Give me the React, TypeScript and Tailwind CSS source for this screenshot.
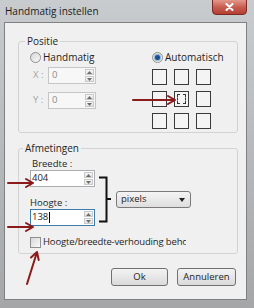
import React from "react";

function Spin() {
  return (
    <div className="flex flex-col h-full w-[10px] py-[1px] pr-[1px] gap-[1px]">
      <div className="flex-1 bg-gradient-to-b from-[#f6f6f6] to-[#e2e2e2] border border-[#c9c9c9] flex items-center justify-center">
        <svg width="5" height="3" viewBox="0 0 5 3"><path d="M0 3 L2.5 0 L5 3 Z" fill="#6d6d6d" /></svg>
      </div>
      <div className="flex-1 bg-gradient-to-b from-[#f6f6f6] to-[#e2e2e2] border border-[#c9c9c9] flex items-center justify-center">
        <svg width="5" height="3" viewBox="0 0 5 3"><path d="M0 0 L2.5 3 L5 0 Z" fill="#6d6d6d" /></svg>
      </div>
    </div>
  );
}

function Radio({ checked }: { checked?: boolean }) {
  return (
    <div className="w-[11px] h-[11px] rounded-full border border-[#8e8f8f] bg-gradient-to-br from-[#d6d6d6] to-[#fbfbfb] flex items-center justify-center">
      {checked && <div className="w-[5px] h-[5px] rounded-full bg-[#1d4f8f] ring-1 ring-[#8fb2d8]" />}
    </div>
  );
}

function Square({ focus }: { focus?: boolean }) {
  return (
    <div className="w-[15px] h-[16px] border-[1.5px] border-[#3a3a3a] bg-[#f4f4f4] flex items-center justify-center">
      {focus && <div className="w-[9px] h-[10px] border border-dashed border-[#333]" />}
    </div>
  );
}

export default function App() {
  return (
    <div className="w-[254px] h-[308px] relative overflow-hidden flex flex-col bg-gradient-to-b from-[#c9cccf] to-[#a4a6a8] pl-[4px] pr-[7px] pb-[8px] [font-family:'Open_Sans',sans-serif] text-[9.5px] text-[#1e1e1e]">
      {/* title bar */}
      <div className="h-[22px] flex items-start justify-between">
        <div className="mt-[4px] ml-[1px] text-[10px] leading-[14px] text-[#1b1b1b]">Handmatig instellen</div>
        <div className="w-[35px] h-[16px] mt-[-1px] rounded-b-[4px] border border-[#7d2a22] bg-gradient-to-b from-[#e3988c] via-[#c85e52] to-[#b33d31] flex items-center justify-center">
          <svg width="9" height="8" viewBox="0 0 9 8">
            <path d="M1.5 1 L7.5 7 M7.5 1 L1.5 7" stroke="#ffffff" strokeWidth="2" strokeLinecap="round" />
          </svg>
        </div>
      </div>

      {/* content */}
      <div className="flex-1 bg-[#f0f0f0] border border-[#7e8082] pl-[13px] pr-[8px] pt-[18px] flex flex-col">
        {/* Positie */}
        <div className="relative border border-[#d3d3d3] rounded-[3px] pl-[11px] pt-[8px] pb-[3px] flex">
          <div className="absolute left-[6px] top-[-8px] px-[2px] bg-[#f0f0f0] leading-[14px] text-[10px]">Positie</div>
          <div className="w-[122px] flex flex-col">
            <div className="h-[14px] flex items-center gap-[2px]">
              <Radio />
              <span className="text-[10px]">Handmatig</span>
            </div>
            <div className="mt-[3px] h-[17px] flex items-center">
              <div className="w-[18px] pl-[3px] text-[#a5a5a5]">X :</div>
              <div className="w-[48px] h-[17px] border border-[#c3c5c8] bg-[#f7f7f7] flex items-center">
                <div className="flex-1 pl-[3px] text-[#8d8d8d]">0</div>
                <Spin />
              </div>
            </div>
            <div className="mt-[8px] h-[17px] flex items-center">
              <div className="w-[18px] pl-[3px] text-[#a5a5a5]">Y :</div>
              <div className="w-[48px] h-[17px] border border-[#c3c5c8] bg-[#f7f7f7] flex items-center">
                <div className="flex-1 pl-[3px] text-[#8d8d8d]">0</div>
                <Spin />
              </div>
            </div>
          </div>
          <div className="flex flex-col">
            <div className="h-[14px] flex items-center gap-[2px]">
              <Radio checked />
              <span className="text-[10px]">Automatisch</span>
            </div>
            <div className="mt-[5px] grid grid-cols-[15px_15px_15px] gap-x-[7px] gap-y-[6px]">
              <Square />
              <Square />
              <Square />
              <Square />
              <Square focus />
              <Square />
              <Square />
              <Square />
              <Square />
            </div>
          </div>
        </div>

        {/* Afmetingen */}
        <div className="relative mt-[15px] border border-[#d3d3d3] rounded-[3px] pl-[11px] pt-[9px] pb-[5px] flex flex-col">
          <div className="absolute left-[4px] top-[-8px] px-[2px] bg-[#f0f0f0] leading-[14px] text-[10px]">Afmetingen</div>
          <div className="flex items-start">
            <div className="w-[66px] flex flex-col">
              <div className="h-[12px] leading-[12px] pl-[2px]">Breedte :</div>
              <div className="w-[65px] h-[17px] border border-[#abadb3] bg-white flex items-center">
                <div className="flex-1 pl-[1px] text-[#222]">404</div>
                <Spin />
              </div>
              <div className="mt-[10px] h-[12px] leading-[12px]">Hoogte :</div>
              <div className="w-[65px] h-[17px] border border-[#3d7bad] bg-white flex items-center">
                <div className="flex-1 pl-[1px] text-[#222] flex items-center">
                  <span>138</span>
                  <span className="w-[1px] h-[11px] bg-black ml-[1px]" />
                </div>
                <Spin />
              </div>
            </div>
            <svg className="mt-[18px] ml-[2px]" width="14" height="48" viewBox="0 0 14 48">
              <path d="M1 1.5 H8.5 V45.5 H1 M8.5 23 H13" stroke="#111" strokeWidth="2" fill="none" />
            </svg>
            <div className="mt-[33px] ml-[4px] w-[75px] h-[17px] rounded-[3px] border border-[#7a7a7a] bg-gradient-to-b from-[#f4f4f4] to-[#dedede] flex items-center justify-between pl-[4px] pr-[5px]">
              <span>pixels</span>
              <svg width="6" height="4" viewBox="0 0 6 4"><path d="M0 0 L3 4 L6 0 Z" fill="#222" /></svg>
            </div>
          </div>
          <div className="mt-[10px] h-[12px] flex items-center gap-[2px]">
            <div className="w-[11px] h-[11px] border border-[#8e8f8f] bg-gradient-to-br from-[#d8d8d8] to-[#f9f9f9]" />
            <div className="w-[143px] overflow-hidden whitespace-nowrap leading-[12px] tracking-[-0.15px]">Hoogte/breedte-verhouding behouden</div>
          </div>
        </div>

        {/* buttons */}
        <div className="mt-[14px] flex justify-end gap-[9px] pr-[2px]">
          <div className="w-[57px] h-[18px] rounded-[3px] border border-[#707070] bg-gradient-to-b from-[#f3f3f3] to-[#dadada] flex items-center justify-center">Ok</div>
          <div className="w-[59px] h-[18px] rounded-[3px] border border-[#707070] bg-gradient-to-b from-[#f3f3f3] to-[#dadada] flex items-center justify-center">Annuleren</div>
        </div>
      </div>

      {/* annotation arrows */}
      <svg className="absolute left-0 top-0 pointer-events-none" width="254" height="308" viewBox="0 0 254 308">
        <g stroke="#8b1a1a" strokeWidth="2" fill="none" strokeLinecap="round" strokeLinejoin="round">
          <path d="M133 100 H174 M168 96 L175 100 L168 104" />
          <path d="M8 183 H32 M26 179 L33 183 L26 187" />
          <path d="M8 227 H32 M26 223 L33 227 L26 231" />
          <path d="M27 284 L37 252 M31 257.5 L37 252 L38.7 260" />
        </g>
      </svg>
    </div>
  );
}
